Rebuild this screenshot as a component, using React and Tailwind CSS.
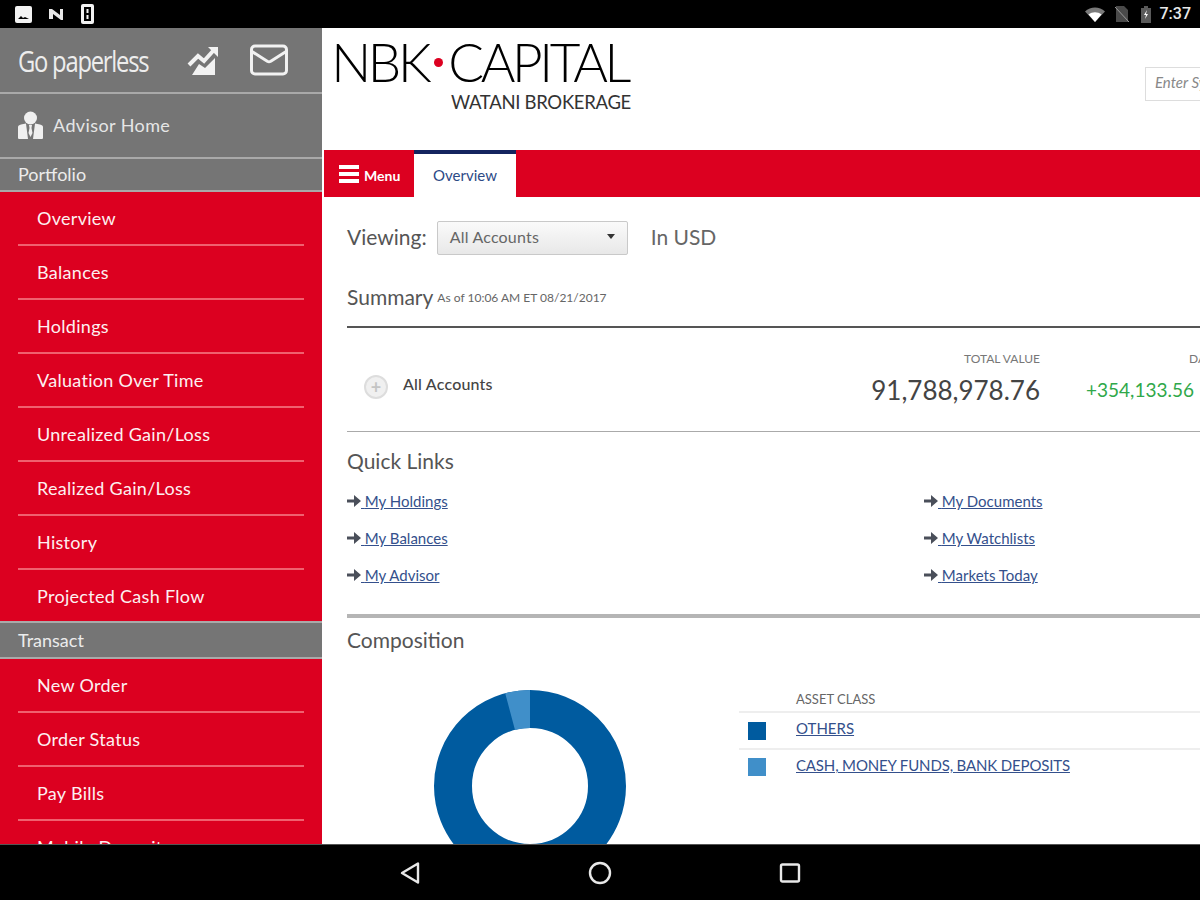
import React from "react";
import { Mail } from "lucide-react";

const portfolioItems = [
  "Overview",
  "Balances",
  "Holdings",
  "Valuation Over Time",
  "Unrealized Gain/Loss",
  "Realized Gain/Loss",
  "History",
  "Projected Cash Flow",
];
const transactItems = ["New Order", "Order Status", "Pay Bills", "Mobile Deposit"];
const quickLinks = [
  ["My Holdings", "My Documents"],
  ["My Balances", "My Watchlists"],
  ["My Advisor", "Markets Today"],
];

function StatusBar() {
  return (
    <div className="flex h-7 shrink-0 items-center justify-between bg-black pl-[15px] pr-[9px] text-white">
      <div className="flex items-center gap-[16px]">
        {/* image notification */}
        <svg width="17" height="17" viewBox="0 0 17 17">
          <rect x="0" y="0" width="17" height="17" rx="2" fill="#f2f2f2" />
          <path d="M3 13l3-3 2 2 2-1 4 2z" fill="#000" />
        </svg>
        {/* N notification */}
        <svg width="17" height="15" viewBox="0 0 17 15">
          <path d="M1 2h3l8 6V2h3v11h-2L5 7v5H1z" fill="#e8e8e8" />
        </svg>
        {/* phone */}
        <svg width="13" height="20" viewBox="0 0 13 20">
          <rect x="0" y="0" width="13" height="20" rx="2" fill="#f2f2f2" />
          <rect x="3" y="3" width="7" height="14" fill="#000" />
          <path d="M5.500 5h2v4h-2zM5.500 11h2v4h-2z" fill="#f2f2f2" />
        </svg>
      </div>
      <div className="flex items-center">
        <svg width="20" height="15" viewBox="0 0 20 15" className="mr-[10px]">
          <path d="M0 4.500C5.500-1 14.500-1 20 4.500L10 15z" fill="#7a7a7a" />
          <path d="M3.500 7.500c3.800-3 9.200-3 13 0L10 15z" fill="#fff" />
        </svg>
        <svg width="14" height="16" viewBox="0 0 14 16" className="mr-[12px]">
          <path d="M1 0h8l4 4v12H1z" fill="#4a4a4a" />
          <path d="M0 1l14 15" stroke="#9a9a9a" strokeWidth="1" />
        </svg>
        <svg width="10" height="17" viewBox="0 0 10 17" className="mr-[9px]">
          <path d="M3 0h4v2h3v15H0V2h3z" fill="#5a5a5a" />
          <path d="M6 4L3 9h2l-1 4 3-5H5z" fill="#fff" />
        </svg>
        <span className="font-['Roboto',sans-serif] text-[16px] font-medium leading-none text-[#e8e8e8]">7:37</span>
      </div>
    </div>
  );
}

function ChartIcon() {
  return (
    <svg width="32" height="32" viewBox="0 0 32 32">
      <path d="M2 21l9-9 6 5L26 7" fill="none" stroke="#f2f2f2" strokeWidth="4" />
      <path d="M21 3h10v10z" fill="#f2f2f2" />
      <path d="M5 31l7-11 6 4 10-10v17z" fill="#f2f2f2" />
    </svg>
  );
}

function AdvisorIcon() {
  return (
    <svg width="27" height="30" viewBox="0 0 27 30">
      <circle cx="13.500" cy="7" r="6.500" fill="#f0f0f0" />
      <path d="M1 16c0-1 1-2 3-2.500l5-1 2 15.500H2c-1 0-1-1-1-1.500zM26 16c0-1-1-2-3-2.500l-5-1-2 15.500h9c1 0 1-1 1-1.500z" fill="#f0f0f0" />
      <path d="M12 14h3l-.5 3 1 5-2 4-2-4 1-5z" fill="#f0f0f0" />
    </svg>
  );
}

function SectionLabel({ children, className }) {
  return (
    <div className={`flex shrink-0 items-center border-y-2 border-[#a9a9a9] bg-[#757575] pl-[18px] text-[18px] leading-none text-[#ececec] ${className}`}>
      {children}
    </div>
  );
}

function MenuItem({ label }) {
  return (
    <div className="mx-[18px] flex h-[54px] shrink-0 items-center border-b-2 border-[#f0606f] pl-[19px] text-[18px] tracking-[0.3px] text-[#fdf0f1]">
      {label}
    </div>
  );
}

function Sidebar() {
  return (
    <div className="flex w-[322px] shrink-0 flex-col overflow-hidden bg-[#dc0020] font-['Lato',sans-serif]">
      <div className="flex h-[66px] shrink-0 items-center border-b-2 border-[#a9a9a9] bg-[#757575] pl-[18px]">
        <span className="w-[169px] origin-left scale-x-[0.82] font-['Open_Sans',sans-serif] text-[29px] leading-none tracking-[-1.5px] text-[#ededed]">
          Go paperless
        </span>
        <ChartIcon />
        <Mail size={42} strokeWidth={1.7} color="#f2f2f2" className="ml-[29px]" />
      </div>
      <div className="flex h-[63px] shrink-0 items-center gap-[9px] bg-[#757575] pl-[17px] text-[18px] tracking-[0.4px] text-[#e6e6e6]">
        <AdvisorIcon />
        Advisor Home
      </div>
      <SectionLabel className="h-[35px] pb-[2px]">Portfolio</SectionLabel>
      {portfolioItems.map((item) => (
        <MenuItem key={item} label={item} />
      ))}
      <SectionLabel className="-mt-[3px] h-[38px]">Transact</SectionLabel>
      {transactItems.map((item) => (
        <MenuItem key={item} label={item} />
      ))}
    </div>
  );
}

function Logo() {
  return (
    <div className="flex w-[296px] shrink-0 flex-col items-end text-black">
      <div className="mr-[3px] flex h-[44px] items-center font-['Lato',sans-serif] text-[53px] font-light leading-[44px] tracking-[-3.4px]">
        NBK
        <span className="ml-[6px] mr-[5px] h-[9px] w-[9px] shrink-0 rounded-full bg-[#dc0020]" />
        CAPITAL
      </div>
      <div className="mt-[9px] font-['Lato',sans-serif] text-[18.500px] leading-none tracking-[-0.3px] text-[#333]">
        WATANI BROKERAGE
      </div>
    </div>
  );
}

function NavBar() {
  return (
    <div className="ml-[2px] flex h-[47px] shrink-0 bg-[#dc0020]">
      <div className="flex w-[90px] items-center pl-[15px] pt-[1px] text-white">
        <div className="flex w-[20px] flex-col gap-[3px]">
          <div className="h-[4px] bg-white" />
          <div className="h-[4px] bg-white" />
          <div className="h-[4px] bg-white" />
        </div>
        <span className="ml-[5px] pt-[2px] text-[14px] font-bold">Menu</span>
      </div>
      <div className="flex w-[102px] items-center justify-center border-t-4 border-[#14245f] bg-white pb-[1px] text-[15px] text-[#2c4a86]">
        Overview
      </div>
    </div>
  );
}

function QuickLink({ label }) {
  return (
    <div className="flex items-center text-[15px] text-[#34508c]">
      <svg width="14" height="12" viewBox="0 0 14 12">
        <path d="M0 4.500h7V0l7 6-7 6V7.500H0z" fill="#4a4f5a" />
      </svg>
      <span className="underline">&nbsp;{label}</span>
    </div>
  );
}

function Donut() {
  return (
    <svg width="192" height="192" viewBox="0 0 192 192" className="ml-[87px] mt-[28px] shrink-0">
      <circle cx="96" cy="96" r="77" fill="none" stroke="#005b9f" strokeWidth="38" />
      <path d="M96 0A96 96 0 0 0 71.200 3.300L81 40A58 58 0 0 1 96 38z" fill="#408fc9" />
    </svg>
  );
}

function Content() {
  return (
    <div className="w-[1000px] pl-[25px] font-['Lato',sans-serif] text-[#444]">
      <div className="flex h-[58px] items-end">
        <div className="flex h-[34px] items-center text-[21px] text-[#555]">
          <span className="pb-[2px]">Viewing:</span>
          <div className="ml-[10px] flex h-[34px] w-[191px] items-center justify-between rounded-[2px] border border-[#c9c9c9] bg-gradient-to-b from-[#fafafa] to-[#e8e8e8] pb-[3px] pl-[12px] pr-[12px] text-[16px] tracking-[0.2px] text-[#666]">
            All Accounts
            <div className="h-0 w-0 border-x-[4px] border-t-[5px] border-x-transparent border-t-[#333]" />
          </div>
          <span className="ml-[23px] pb-[2px] text-[#666]">In USD</span>
        </div>
      </div>

      <div className="flex h-[73px] items-end border-b-2 border-[#555] pb-[17px]">
        <span className="text-[21px] leading-[24px] text-[#555]">Summary</span>
        <span className="ml-[4px] pb-[1px] text-[12px] leading-[20px] text-[#666]">As of 10:06 AM ET 08/21/2017</span>
      </div>

      <div className="flex h-[104px] items-center border-b border-[#aaa]">
        <div className="ml-[17px] mt-[14px] flex h-[24px] w-[24px] shrink-0 items-center justify-center rounded-full border-2 border-[#ddd] bg-[#f0f0f0] text-[18px] font-bold leading-none text-[#c4c4c4]">
          +
        </div>
        <span className="ml-[15px] mt-[8px] w-[306px] shrink-0 text-[16px] font-medium tracking-[0.2px] text-[#444]">All Accounts</span>
        <div className="flex w-[331px] shrink-0 flex-col items-end">
          <span className="mb-[5px] text-[12px] leading-[16px] text-[#777]">TOTAL VALUE</span>
          <span className="text-[26px] leading-[36px] text-[#444]">91,788,978.76</span>
        </div>
        <div className="ml-[46px] flex w-[200px] shrink-0 flex-col items-start">
          <span className="mb-[5px] ml-[103px] text-[12px] leading-[16px] text-[#777]">DAY CHANGE</span>
          <span className="text-[19px] leading-[36px] text-[#2fa84a]">+354,133.56</span>
        </div>
      </div>

      <div className="flex h-[58px] items-center text-[21px] text-[#555]">Quick Links</div>
      <div className="flex flex-col gap-[17px]">
        {quickLinks.map(([left, right]) => (
          <div key={left} className="grid h-[20px] grid-cols-[577px_1fr]">
            <QuickLink label={left} />
            <QuickLink label={right} />
          </div>
        ))}
      </div>

      <div className="mt-[30px] h-[4px] bg-[#b5b5b5]" />
      <div className="flex h-[44px] items-center text-[21px] text-[#555]">Composition</div>

      <div className="flex">
        <Donut />
        <div className="ml-[113px] mt-[27px] w-[600px] shrink-0">
          <div className="flex h-[24px] items-center border-b-2 border-[#eee] pl-[57px] text-[13px] text-[#666]">
            ASSET CLASS
          </div>
          <div className="flex h-[37px] items-center border-b-2 border-[#eee] pl-[9px]">
            <div className="h-[18px] w-[18px] bg-[#005b9f]" />
            <span className="ml-[30px] pb-[4px] text-[15px] text-[#34508c] underline">OTHERS</span>
          </div>
          <div className="flex h-[33px] items-center pl-[9px]">
            <div className="h-[18px] w-[18px] bg-[#408fc9]" />
            <span className="ml-[30px] pb-[2px] text-[15px] tracking-[-0.15px] text-[#34508c] underline">CASH, MONEY FUNDS, BANK DEPOSITS</span>
          </div>
        </div>
      </div>
    </div>
  );
}

function Main() {
  return (
    <div className="flex min-w-0 flex-1 flex-col overflow-hidden bg-white">
      <div className="flex h-[122px] shrink-0 pl-[13px] font-['Lato',sans-serif]">
        <div className="pt-[12px]">
          <Logo />
        </div>
        <div className="ml-[514px] mt-[39px] flex h-[34px] w-[160px] shrink-0 items-center border border-[#ddd] pb-[3px] pl-[9px] text-[15px] italic text-[#888]">
          Enter Symbol
        </div>
      </div>
      <div className="font-['Lato',sans-serif]">
        <NavBar />
      </div>
      <Content />
    </div>
  );
}

function BottomBar() {
  return (
    <div className="flex h-[56px] shrink-0 items-center justify-center gap-[167px] border-t border-[#555] bg-black">
      <svg width="22" height="24" viewBox="0 0 22 24">
        <path d="M19 2.500v19L3 12z" fill="none" stroke="#e8e8e8" strokeWidth="2.400" strokeLinejoin="round" />
      </svg>
      <svg width="24" height="24" viewBox="0 0 24 24">
        <circle cx="12" cy="12" r="10" fill="none" stroke="#e8e8e8" strokeWidth="2.400" />
      </svg>
      <svg width="22" height="22" viewBox="0 0 22 22">
        <rect x="2" y="2.500" width="18" height="17" rx="1.500" fill="none" stroke="#e8e8e8" strokeWidth="2.400" />
      </svg>
    </div>
  );
}

export default function App() {
  return (
    <div className="flex h-[900px] w-[1200px] flex-col overflow-hidden bg-white">
      <StatusBar />
      <div className="flex min-h-0 flex-1">
        <Sidebar />
        <Main />
      </div>
      <BottomBar />
    </div>
  );
}
